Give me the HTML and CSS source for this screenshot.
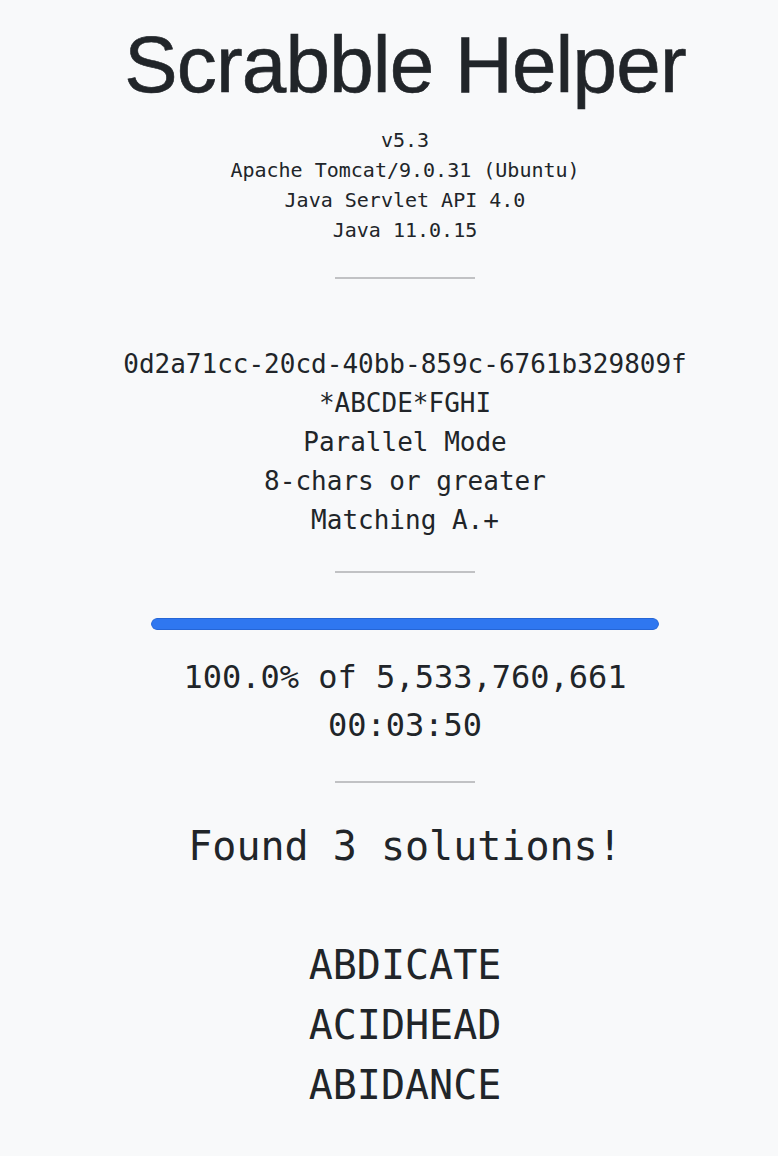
FILE: index.html
```html
<!DOCTYPE html>
<html lang="en">
<head>
<meta charset="utf-8">
<title>Scrabble Helper</title>
<link rel="stylesheet" href="styles.css">
</head>
<body>
<main class="page">
  <h1 class="title">Scrabble Helper</h1>
  <div class="info">
    <div>v5.3</div>
    <div>Apache Tomcat/9.0.31 (Ubuntu)</div>
    <div>Java Servlet API 4.0</div>
    <div>Java 11.0.15</div>
  </div>
  <hr class="rule">
  <div class="job">
    <div>0d2a71cc-20cd-40bb-859c-6761b329809f</div>
    <div>*ABCDE*FGHI</div>
    <div>Parallel Mode</div>
    <div>8-chars or greater</div>
    <div>Matching A.+</div>
  </div>
  <hr class="rule rule-tight">
  <div class="progress"><div class="progress-fill" style="width:100%"></div></div>
  <div class="stats">
    <div>100.0% of 5,533,760,661</div>
    <div>00:03:50</div>
  </div>
  <hr class="rule">
  <div class="found">Found 3 solutions!</div>
  <div class="words">
    <div>ABDICATE</div>
    <div>ACIDHEAD</div>
    <div>ABIDANCE</div>
  </div>
</main>
</body>
</html>
```
FILE: styles.css
```css
html, body {
  margin: 0;
  padding: 0;
  background: #f8f9fa;
  color: #212529;
}

.page {
  padding: 17px 0 0 32px;
  text-align: center;
  font-family: "DejaVu Sans Mono", "Liberation Mono", monospace;
}

.title {
  margin: 0;
  font-family: "Liberation Sans", Arial, sans-serif;
  font-weight: 400;
  font-size: 80px;
  line-height: 96px;
  letter-spacing: -0.8px;
  color: #212529;
  -webkit-text-stroke: 0.6px #212529;
}

.info {
  margin-top: 12px;
  font-size: 20px;
  line-height: 30px;
}

.rule {
  width: 140px;
  height: 2px;
  border: 0;
  background: #c1c2c4;
  margin: 32px auto;
}

.rule-tight {
  margin-top: 31px;
}

.job {
  margin-top: 66px;
  font-size: 26px;
  line-height: 39px;
}

.progress {
  width: 508px;
  height: 12px;
  margin: 45px auto 0;
  box-sizing: border-box;
  border-radius: 6px;
  background: #e9ecef;
  overflow: hidden;
}

.progress-fill {
  height: 100%;
  box-sizing: border-box;
  background: #2f77f0;
  border: 1px solid #2666d6;
  border-radius: 6px;
}

.stats {
  margin-top: 23px;
  font-size: 32px;
  line-height: 48px;
}

.found {
  margin-top: 33px;
  font-size: 40px;
  line-height: 60px;
}

.words {
  margin-top: 59px;
  font-size: 40px;
  line-height: 60px;
}
```
